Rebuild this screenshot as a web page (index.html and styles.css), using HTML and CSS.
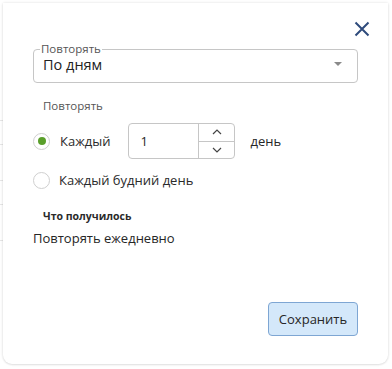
FILE: index.html
```html
<!DOCTYPE html>
<html lang="ru">
<head>
<meta charset="utf-8">
<link rel="stylesheet" href="styles.css">
</head>
<body>
<div class="bg">
  <div class="bg-lines"><span></span><span></span><span></span><span></span><span></span></div>
  <div class="dialog">
    <div class="top">
      <button class="close" aria-label="Закрыть">
        <svg width="16" height="16" viewBox="0 0 16 16"><path d="M1.5 1.5L14.5 14.5M14.5 1.5L1.5 14.5" stroke="#2f4b7c" stroke-width="2" fill="none"/></svg>
      </button>
    </div>
    <fieldset class="select">
      <legend>Повторять</legend>
      <div class="select-row">
        <span class="select-value">По дням</span>
        <span class="caret"></span>
      </div>
    </fieldset>
    <div class="label">Повторять</div>
    <div class="radio-row first">
      <span class="radio checked"></span>
      <span class="radio-text">Каждый</span>
      <div class="num">
        <span class="num-value">1</span>
        <div class="spin">
          <span class="spin-btn"><svg width="10" height="6" viewBox="0 0 10 6"><path d="M1 5L5 1L9 5" stroke="#444" stroke-width="1.2" fill="none"/></svg></span>
          <span class="spin-btn"><svg width="10" height="6" viewBox="0 0 10 6"><path d="M1 1L5 5L9 1" stroke="#444" stroke-width="1.2" fill="none"/></svg></span>
        </div>
      </div>
      <span class="unit">день</span>
    </div>
    <div class="radio-row second">
      <span class="radio"></span>
      <span class="radio-text">Каждый будний день</span>
    </div>
    <div class="result-title">Что получилось</div>
    <div class="result">Повторять ежедневно</div>
    <div class="footer">
      <button class="save">Сохранить</button>
    </div>
  </div>
</div>
</body>
</html>
```
FILE: styles.css
```css
* { box-sizing: border-box; }
html, body { margin: 0; padding: 0; background: #fff; }
body {
  font-family: "Open Sans", "Noto Sans", sans-serif;
  color: #262626;
  width: 392px;
  height: 369px;
  overflow: hidden;
}
.bg { position: relative; width: 392px; height: 369px; padding: 3px 4px 5px 3px; }
.bg-lines { position: absolute; left: 0; top: 0; width: 3px; height: 369px; }
.bg-lines span { position: absolute; left: 0; width: 3px; height: 1px; background: #e6e6e6; }
.bg-lines span:nth-child(1) { top: 120px; }
.bg-lines span:nth-child(2) { top: 144px; }
.bg-lines span:nth-child(3) { top: 180px; }
.bg-lines span:nth-child(4) { top: 204px; }
.bg-lines span:nth-child(5) { top: 240px; }
.dialog {
  position: relative;
  height: 100%;
  background: #fff;
  border-radius: 0 0 9px 9px;
  box-shadow: 0 0 3px rgba(0,0,0,0.12), 0 1px 2px rgba(0,0,0,0.08);
  padding: 18px 30px 0 30px;
  display: flex;
  flex-direction: column;
}
.top { display: flex; justify-content: flex-end; height: 20px; margin-right: -12px; }
.close { border: 0; background: none; padding: 0; width: 16px; height: 16px; display: flex; }
.select {
  margin: 2px 0 0 0;
  padding: 0 10px 0 9px;
  border: 1px solid #c6c6c6;
  border-radius: 4px;
  height: 40px;
  min-width: 0;
}
.select legend {
  font-size: 11.5px;
  color: #555;
  padding: 0 1px;
  margin-left: -3px;
  line-height: 12px;
}
.select-row { display: flex; align-items: center; justify-content: space-between; height: 26px; margin-top: -4px; }
.select-value { font-size: 14.5px; color: #222; }
.caret { width: 0; height: 0; border-left: 4px solid transparent; border-right: 4px solid transparent; border-top: 4px solid #8a8a8a; margin-right: 5px; }
.label { font-size: 11.5px; color: #555; margin: 15px 0 0 10px; line-height: 16px; }
.radio-row { display: flex; align-items: center; }
.radio-row.first { margin-top: 9px; height: 36px; }
.radio-row.second { margin-top: 9px; height: 24px; }
.radio {
  width: 17px; height: 17px; border-radius: 50%;
  border: 1px solid #cfcfcf; background: #fff;
  display: flex; align-items: center; justify-content: center;
  flex: none;
}
.radio.checked::after { content: ""; width: 8px; height: 8px; border-radius: 50%; background: #5a9f2b; }
.radio-text { font-size: 13px; margin-left: 10px; color: #2a2a2a; }
.radio-row.second .radio-text { margin-left: 9px; }
.num {
  margin-left: 18px;
  width: 107px; height: 36px;
  border: 1px solid #c6c6c6; border-radius: 4px;
  display: flex;
}
.num-value { flex: 1; font-size: 13px; padding-left: 11px; display: flex; align-items: center; }
.spin { width: 36px; border-left: 1px solid #c6c6c6; display: flex; flex-direction: column; }
.spin-btn { flex: 1; display: flex; align-items: center; justify-content: center; }
.spin-btn + .spin-btn { border-top: 1px solid #c6c6c6; }
.unit { font-size: 13px; margin-left: 15px; }
.result-title { font-size: 10.5px; font-weight: 700; margin: 16px 0 0 10px; color: #2a2a2a; line-height: 16px; }
.result { font-size: 13px; margin-top: 4px; line-height: 20px; }
.footer { margin-top: auto; margin-bottom: 28px; display: flex; justify-content: flex-end; }
.save {
  width: 90px; height: 34px;
  background: #d4e8fa; border: 1px solid #7ea6d3; border-radius: 4px;
  font-family: inherit; font-size: 13px; color: #262626; padding: 0;
}
```
